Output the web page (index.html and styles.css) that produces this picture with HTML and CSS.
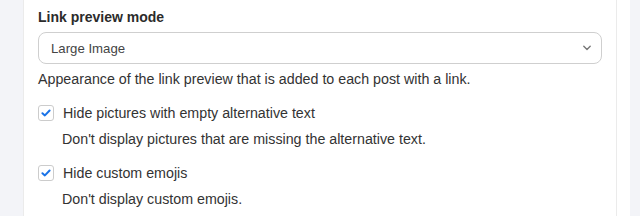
FILE: index.html
```html
<!DOCTYPE html>
<html>
<head>
<meta charset="utf-8">
<link rel="stylesheet" href="styles.css">
</head>
<body>
<div class="page">
  <div class="gutter"></div>
  <div class="panel">
    <div class="field-label">Link preview mode</div>
    <div class="select">
      <span class="select-value">Large Image</span>
      <svg class="chevron" width="10" height="6" viewBox="0 0 10 6"><path d="M1.8 1.3 L5 4.4 L8.2 1.3" fill="none" stroke="#777" stroke-width="1.4" stroke-linecap="round" stroke-linejoin="round"/></svg>
    </div>
    <div class="help">Appearance of the link preview that is added to each post with a link.</div>
    <div class="option">
      <div class="option-row">
        <span class="checkbox"><svg width="12" height="10" viewBox="0 0 12 10"><path d="M2.4 5.2 L4.9 7.4 L9.6 2.5" fill="none" stroke="#1a73e8" stroke-width="2" stroke-linecap="round" stroke-linejoin="round"/></svg></span>
        <span class="option-label">Hide pictures with empty alternative text</span>
      </div>
      <div class="option-help">Don't display pictures that are missing the alternative text.</div>
    </div>
    <div class="option">
      <div class="option-row">
        <span class="checkbox"><svg width="12" height="10" viewBox="0 0 12 10"><path d="M2.4 5.2 L4.9 7.4 L9.6 2.5" fill="none" stroke="#1a73e8" stroke-width="2" stroke-linecap="round" stroke-linejoin="round"/></svg></span>
        <span class="option-label">Hide custom emojis</span>
      </div>
      <div class="option-help">Don't display custom emojis.</div>
    </div>
  </div>
  <div class="strip"></div>
  <div class="side"></div>
</div>
</body>
</html>
```
FILE: styles.css
```css
html, body {
  margin: 0;
  padding: 0;
  height: 100%;
}
body {
  background: #f3f4f8;
  font-family: "Liberation Sans", Arial, sans-serif;
  color: #333;
  font-size: 14.25px;
  overflow: hidden;
}
.page {
  display: flex;
  height: 216px;
}
.gutter {
  width: 23px;
  flex: none;
}
.panel {
  width: 564px;
  flex: none;
  background: #fff;
  border-left: 1px solid #ebebeb;
  border-right: 1px solid #ebebeb;
  padding: 7px 14px 0 14px;
  display: flex;
  flex-direction: column;
}
.strip {
  width: 13px;
  flex: none;
  background: #fff;
}
.side {
  flex: 1;
}
.field-label {
  font-weight: bold;
  font-size: 14px;
  line-height: 20px;
  color: #2b2b2b;
}
.select {
  margin-top: 5px;
  height: 30px;
  border: 1px solid #cfcfcf;
  border-radius: 8px;
  display: flex;
  align-items: center;
  justify-content: space-between;
  padding: 0 9px 0 12px;
}
.select-value {
  font-size: 13.2px;
  color: #444;
}
.chevron {
  display: block;
}
.help {
  margin-top: 5px;
  line-height: 20px;
}
.option {
  margin-top: 14px;
  display: flex;
  flex-direction: column;
  gap: 6px;
}
.option-row {
  display: flex;
  align-items: center;
  gap: 9px;
  line-height: 20px;
}
.checkbox {
  width: 14px;
  height: 14px;
  border: 1px solid #cccccc;
  border-radius: 3px;
  background: #fff;
  display: flex;
  align-items: center;
  justify-content: center;
  flex: none;
}
.option-help {
  padding-left: 24px;
  line-height: 20px;
}
```
